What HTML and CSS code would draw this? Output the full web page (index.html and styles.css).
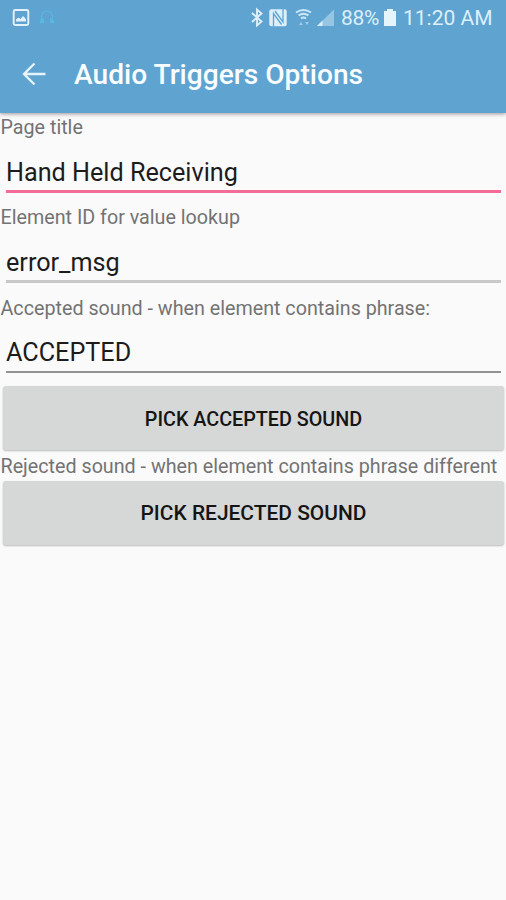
FILE: index.html
```html
<!DOCTYPE html>
<html lang="en">
<head><meta charset="utf-8"><title>Audio Triggers Options</title><link rel="stylesheet" href="styles.css"></head>
<body>
<header class="top">
<div class="status">
<svg width="60" height="36" viewBox="0 0 60 36"><rect x="13.700" y="10" width="14.600" height="15" rx="1.500" fill="none" stroke="#e3f2fb" stroke-width="1.900"/><path d="M16 21.500v-2l2.500-2 2 1.500 2.500-3 3 3v2.500z" fill="#e3f2fb"/><path d="M41.500 20v-3.500a5.500 5.500 0 0 1 11 0V20" fill="none" stroke="#58b5e0" stroke-width="1.300"/><path d="M40 23v-3l4-2v5zM54 23v-3l-4-2v5z" fill="#55b9e2"/></svg>
<svg class="signals" width="88" height="36" viewBox="248 0 88 36"><path d="M252 13l9.500 8.500-4.500 4V9.500l4.500 4L252 22" fill="none" stroke="#dceffa" stroke-width="1.900"/><rect x="269.300" y="9.300" width="17.400" height="17" rx="2" fill="#dceffa"/><path d="M273.500 26.500V13.500L281.500 24.500M275 11l8 11V9" fill="none" stroke="#5fa3d1" stroke-width="1.300"/><g fill="none" stroke="#cbe6f6" stroke-width="2"><path d="M296 12.500q7.500-5 15 0M298.500 15.500q5-3.500 10 0M301 18.500q2.500-2 5 0"/></g><path d="M299 25l2-3 2 3zM305 22h4l-2 3z" fill="#a0cbe8"/><path d="M317 26L334 9.500V26z" fill="#97c6e5"/><path d="M317 26l5.500-5.500V26z" fill="#d7edf9"/></svg>
<span class="percent">88%</span><svg class="battery" width="12" height="17" viewBox="0 0 12 17"><path d="M3 0h6v2h3v15H0V2h3z" fill="#e6f5fc"/></svg><span class="time">11:20 AM</span>
</div>
<div class="bar"><svg width="24" height="24" viewBox="0 0 24 24"><path d="M23.500 12H2.500M12.500 1.500L2 12l10.500 10.500" fill="none" stroke="#e4f3fc" stroke-width="2.400"/></svg><h1>Audio Triggers Options</h1></div>
</header>
<main>
<div class="label">Page title</div><div class="field active">Hand Held Receiving</div>
<div class="label second">Element ID for value lookup</div><div class="field light">error_msg</div>
<div class="label third">Accepted sound - when element contains phrase:</div><div class="field dark">ACCEPTED</div>
<button class="pick accepted">PICK ACCEPTED SOUND</button>
<div class="label fourth">Rejected sound - when element contains phrase different</div>
<button class="pick rejected">PICK REJECTED SOUND</button>
</main>
</body></html>
```
FILE: styles.css
```css
* { box-sizing: border-box; }
body { margin: 0; background: #fafafa; font-family: Roboto, sans-serif; height: 900px; overflow: hidden; }
svg { display: block; flex: none; }
.top { height: 113px; background: #5fa3d1; box-shadow: 0 1px 4px #9b9499; }
.status { height: 36px; display: flex; align-items: center; color: #dceffa; font-size: 21px; white-space: nowrap; }
.signals { margin-left: 188px; }
.percent { width: 43px; margin-left: 5px; letter-spacing: -.3px; }
.battery { margin-bottom: 1px; }
.time { margin-left: 7px; }
.bar { height: 76px; display: flex; align-items: center; padding: 0 0 0 22px; }
.bar h1 { margin: 1px 0 0 28px; color: #f8fdff; font-size: 28.150px; font-weight: 500; line-height: 34px; white-space: nowrap; }
main { display: flex; flex-direction: column; padding-top: 3px; }
.label { height: 24px; line-height: 24px; padding-left: .5px; color: #737373; font-size: 19.720px; white-space: nowrap; }
.second { margin-top: 13px; }
.third { margin-top: 14px; }
.field { height: 53px; line-height: 34px; padding-top: 16px; margin: 0 5px 0 6px; color: #1c1c1c; font-size: 25.200px; white-space: nowrap; border-bottom: 3px solid #f36c98; }
.light { border-color: #c8c8c8; }
.dark { height: 52px; padding-top: 15px; border-bottom: 2px solid #929292; }
.pick { display: block; height: 64px; margin: 0 2px 0 3px; padding: 0; border: 0; border-radius: 3px; background: #d6d7d7; box-shadow: 0 1px 2px #bababa; color: #151515; font: 500 19.750px Roboto, sans-serif; }
.accepted { margin-top: 13px; padding-top: 3px; }
.fourth { margin-top: 5px; }
.rejected { margin-top: 2px; font-size: 20.950px; }
```
